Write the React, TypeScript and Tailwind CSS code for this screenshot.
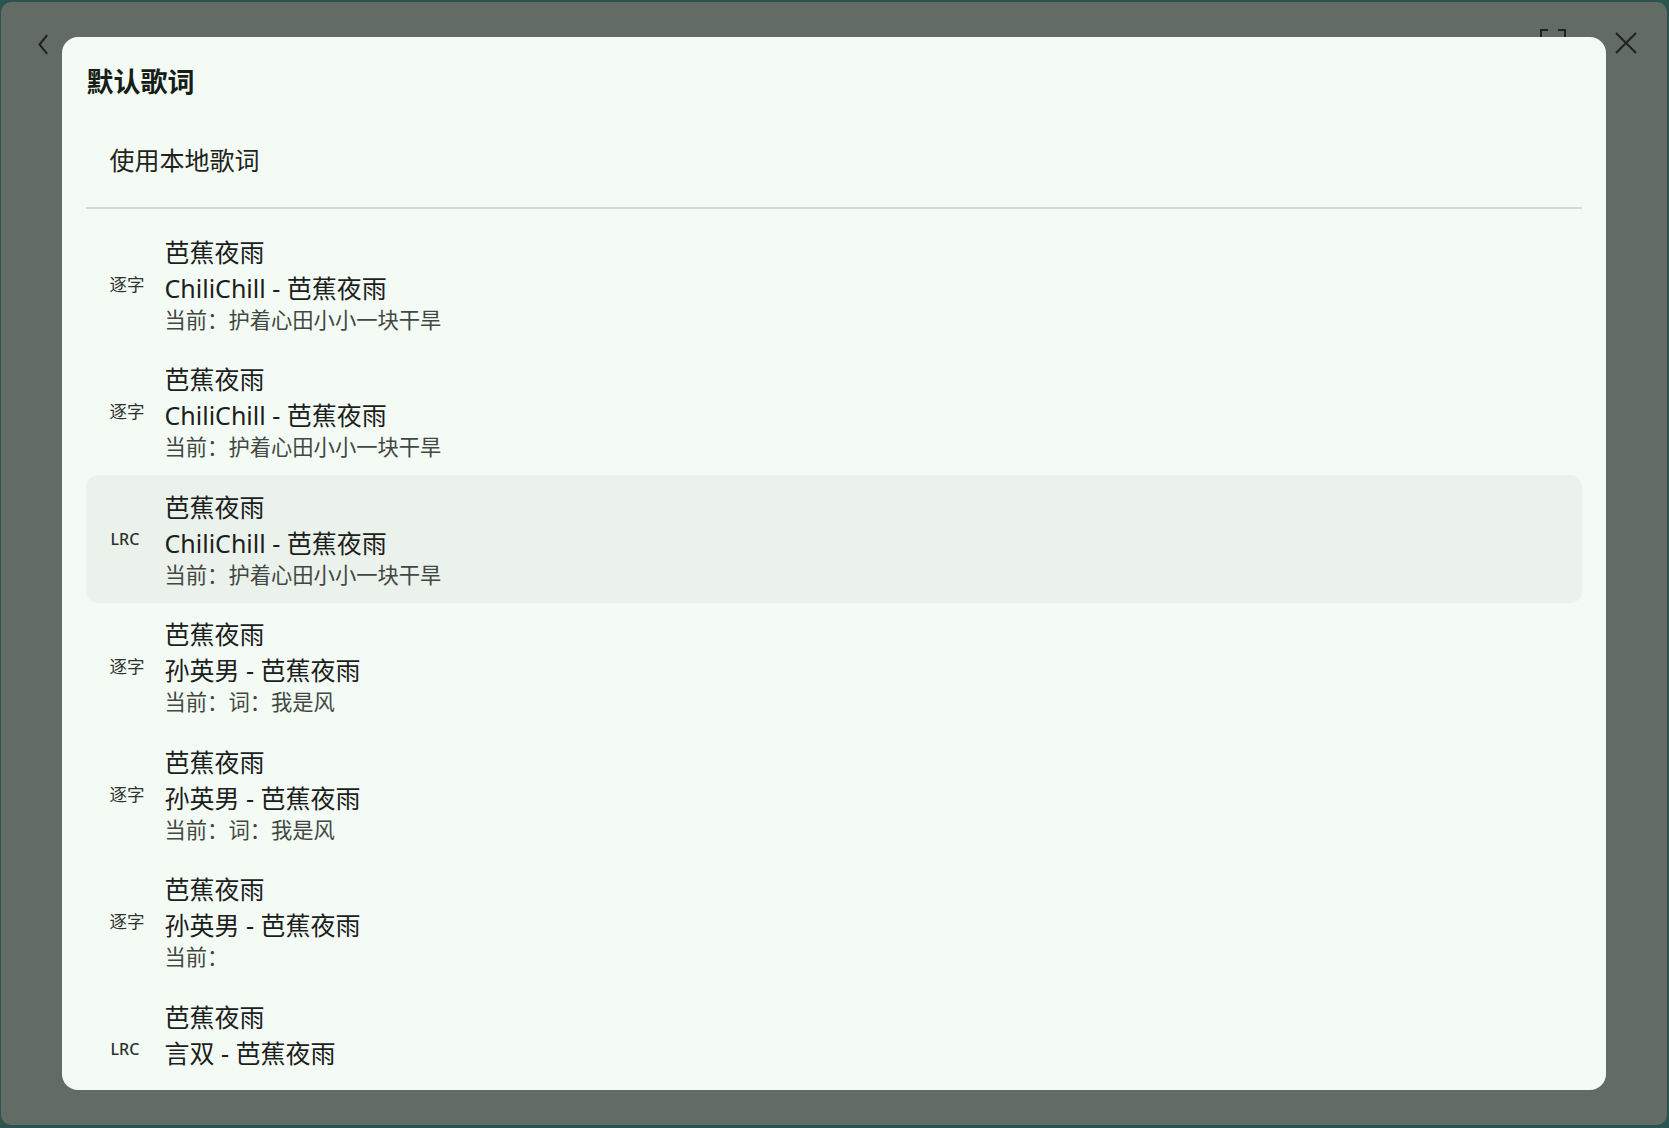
import React from "react";

type Item = { tag: string; title: string; artist: string; current: string; active?: boolean };

const items: Item[] = [
  { tag: "逐字", title: "芭蕉夜雨", artist: "ChiliChill - 芭蕉夜雨", current: "当前：护着心田小小一块干旱" },
  { tag: "逐字", title: "芭蕉夜雨", artist: "ChiliChill - 芭蕉夜雨", current: "当前：护着心田小小一块干旱" },
  { tag: "LRC", title: "芭蕉夜雨", artist: "ChiliChill - 芭蕉夜雨", current: "当前：护着心田小小一块干旱", active: true },
  { tag: "逐字", title: "芭蕉夜雨", artist: "孙英男 - 芭蕉夜雨", current: "当前：词：我是风" },
  { tag: "逐字", title: "芭蕉夜雨", artist: "孙英男 - 芭蕉夜雨", current: "当前：词：我是风" },
  { tag: "逐字", title: "芭蕉夜雨", artist: "孙英男 - 芭蕉夜雨", current: "当前：" },
  { tag: "LRC", title: "芭蕉夜雨", artist: "言双 - 芭蕉夜雨", current: "当前：" },
];

const font = { fontFamily: '"Noto Sans", "Noto Sans CJK SC", sans-serif' };

export default function App() {
  return (
    <div className="w-[1669px] h-[1128px] bg-[#2a5450] pl-[1px] pr-[2px] pt-[2px] pb-[3px]" style={font}>
      <div className="relative w-full h-full rounded-[10px] bg-[#636b65] flex items-center justify-center overflow-hidden">
        {/* back chevron */}
        <svg className="absolute left-[33px] top-[32px]" width="20" height="22" viewBox="0 0 20 22" fill="none">
          <path d="M12.5 2 L5.5 10.5 L12.5 19" stroke="#1f2320" strokeWidth="2" strokeLinecap="square" />
        </svg>
        {/* fullscreen icon */}
        <svg className="absolute left-[1537px] top-[26px]" width="30" height="30" viewBox="0 0 30 30" fill="none">
          <path d="M3 11 V2 H10 M20 2 H27 V11 M3 19 V28 H10 M20 28 H27 V19" stroke="#1f2320" strokeWidth="2" />
        </svg>
        {/* close */}
        <svg className="absolute left-[1612px] top-[28px]" width="26" height="26" viewBox="0 0 26 26" fill="none">
          <path d="M3 3 L23 23 M23 3 L3 23" stroke="#1f2320" strokeWidth="2" />
        </svg>

        <div className="relative z-10 w-[1544px] h-[1053px] rounded-[16px] bg-[#f4fbf4] flex flex-col px-[24px] pt-[27px] pb-[22px] ml-[-1px]">
          <div className="h-[36px] leading-[36px] text-[27px] font-bold text-[#171d19] pl-[1px]">默认歌词</div>
          <div className="mt-[21px] h-[80px] flex items-center pl-[24px] text-[25px] text-[#1f2420]">使用本地歌词</div>
          <div className="mt-[6px] h-[2px] bg-[#d3d9d3] shrink-0" />
          <div className="mt-[11px] flex-1 overflow-hidden">
            {items.map((it, i) => (
              <div
                key={i}
                className={`h-[127.5px] flex items-center pl-[24px] rounded-[12px] ${it.active ? "bg-[#ebf1eb]" : ""}`}
              >
                <div className={`w-[55px] shrink-0 text-[#2d322e] ${it.tag === "LRC" ? "text-[16px] font-medium pl-[1px]" : "text-[17.5px]"}`}>
                  {it.tag}
                </div>
                <div className="flex flex-col">
                  <div className="h-[36px] leading-[36px] text-[25px] text-[#1b201c]">{it.title}</div>
                  <div className="h-[36px] leading-[36px] text-[25px] text-[#1b201c]">{it.artist}</div>
                  <div className="h-[28px] leading-[28px] text-[21.3px] text-[#414843]">{it.current}</div>
                </div>
              </div>
            ))}
          </div>
        </div>
      </div>
    </div>
  );
}
